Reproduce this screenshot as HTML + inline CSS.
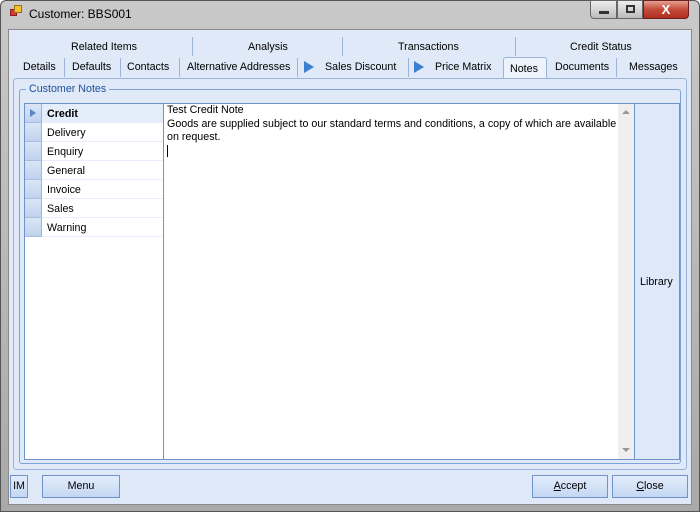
<!DOCTYPE html>
<html><head><style>
*{box-sizing:border-box;margin:0;padding:0}
body{width:700px;height:512px;background:#fff;font-family:"Liberation Sans",sans-serif;font-size:10.7px;color:#000;position:relative;overflow:hidden}
.abs{position:absolute}
.frame{left:0;top:0;width:700px;height:512px;background:linear-gradient(#c9c9c9,#a9a9a9);border:1px solid #555;border-radius:6px 6px 0 0}
.client{left:8px;top:29px;width:684px;height:476px;background:#dfe9f7;border:1px solid #8a8a8a}
.t{position:absolute;white-space:nowrap}
.sep{position:absolute;width:1px;background:#9bb3d6}
.btn{position:absolute;border:1px solid #6f93c8;background:linear-gradient(#e3edfb,#c3d7f3);text-align:center;line-height:21px}
.row{position:absolute;left:0;width:138px;height:19px;line-height:19px;border-bottom:1px solid #e6eef9}
.rh{position:absolute;left:0;top:0;width:17px;height:19px;background:linear-gradient(#dae6f6,#bfd2ee);border-right:1px solid #9eb6da;border-bottom:1px solid #a8bee0}
</style></head><body>
<div class="abs frame"></div>
<div class="abs" style="left:10px;top:9px;width:7px;height:7px;background:#d33;border:1px solid #822"></div>
<div class="abs" style="left:14px;top:5px;width:8px;height:8px;background:#f0c030;border:1px solid #a07010"></div>
<div class="t" style="left:29px;top:7px;font-size:12px">Customer: BBS001</div>
<div class="abs" style="left:590px;top:0;width:27px;height:19px;border:1px solid #666;border-radius:0 0 0 4px;background:linear-gradient(#eee,#bbb)"><div class="abs" style="left:8px;top:10px;width:10px;height:3px;background:#333"></div></div>
<div class="abs" style="left:617px;top:0;width:26px;height:19px;border:1px solid #666;background:linear-gradient(#eee,#bbb)"><div class="abs" style="left:8px;top:4px;width:9px;height:8px;border:2px solid #333"></div></div>
<div class="abs" style="left:643px;top:0;width:46px;height:19px;border:1px solid #6b2020;border-radius:0 0 4px 0;background:linear-gradient(#e8a090,#c44a3a 50%,#b03020);color:#fff;font-weight:bold;text-align:center;line-height:17px;font-size:13px">X</div>
<div class="abs client"></div>
<div class="t" style="left:71px;top:41px">Related Items</div>
<div class="sep" style="left:192px;top:37px;height:19px"></div>
<div class="t" style="left:248px;top:41px">Analysis</div>
<div class="sep" style="left:342px;top:37px;height:19px"></div>
<div class="t" style="left:398px;top:41px">Transactions</div>
<div class="sep" style="left:515px;top:37px;height:19px"></div>
<div class="t" style="left:570px;top:41px">Credit Status</div>
<div class="t" style="left:23px;top:61px">Details</div>
<div class="sep" style="left:64px;top:58px;height:19px"></div>
<div class="t" style="left:72px;top:61px">Defaults</div>
<div class="sep" style="left:120px;top:58px;height:19px"></div>
<div class="t" style="left:127px;top:61px">Contacts</div>
<div class="sep" style="left:179px;top:58px;height:19px"></div>
<div class="t" style="left:187px;top:61px">Alternative Addresses</div>
<div class="sep" style="left:297px;top:58px;height:19px"></div>
<div class="abs" style="left:304px;top:61px;width:0;height:0;border-left:10px solid #3b7fd0;border-top:6px solid transparent;border-bottom:6px solid transparent"></div>
<div class="t" style="left:325px;top:61px">Sales Discount</div>
<div class="sep" style="left:408px;top:58px;height:19px"></div>
<div class="abs" style="left:414px;top:61px;width:0;height:0;border-left:10px solid #3b7fd0;border-top:6px solid transparent;border-bottom:6px solid transparent"></div>
<div class="t" style="left:435px;top:61px">Price Matrix</div>
<div class="abs" style="left:503px;top:57px;width:44px;height:22px;background:#edf3fc;border:1px solid #9bb3d6;border-bottom:none;border-radius:3px 3px 0 0"></div>
<div class="t" style="left:510px;top:63px">Notes</div>
<div class="t" style="left:555px;top:61px">Documents</div>
<div class="sep" style="left:616px;top:58px;height:19px"></div>
<div class="t" style="left:629px;top:61px">Messages</div>
<div class="abs" style="left:13px;top:78px;width:674px;height:392px;border:1px solid #9bb3d6;border-radius:3px;background:#dfe9f7"></div>
<div class="abs" style="left:19px;top:89px;width:662px;height:375px;border:1px solid #7fa2d6;border-radius:3px"></div>
<div class="t" style="left:26px;top:83px;background:#dfe9f7;padding:0 3px;color:#1f4f9a">Customer Notes</div>
<div class="abs" style="left:24px;top:103px;width:656px;height:357px;border:1px solid #6f93c8;background:#fff"></div>
<div class="abs" style="left:25px;top:104px;width:138px;height:355px;background:#fff">
<div class="row" style="top:0;background:#e4eefb"><div class="rh"><div class="abs" style="left:5px;top:5px;border-left:6px solid #5a86c7;border-top:4px solid transparent;border-bottom:4px solid transparent"></div></div><span class="t" style="left:22px;top:1px;font-weight:bold">Credit</span></div>
<div class="row" style="top:19px"><div class="rh"></div><span class="t" style="left:22px;top:1px">Delivery</span></div>
<div class="row" style="top:38px"><div class="rh"></div><span class="t" style="left:22px;top:1px">Enquiry</span></div>
<div class="row" style="top:57px"><div class="rh"></div><span class="t" style="left:22px;top:1px">General</span></div>
<div class="row" style="top:76px"><div class="rh"></div><span class="t" style="left:22px;top:1px">Invoice</span></div>
<div class="row" style="top:95px"><div class="rh"></div><span class="t" style="left:22px;top:1px">Sales</span></div>
<div class="row" style="top:114px"><div class="rh"></div><span class="t" style="left:22px;top:1px">Warning</span></div>
</div>
<div class="abs" style="left:163px;top:104px;width:1px;height:355px;background:#6f93c8"></div>
<div class="t" style="left:167px;top:104px;line-height:13.5px;white-space:normal;width:450px">Test Credit Note<br>Goods are supplied subject to our standard terms and conditions, a copy of which are available on request.<br><span style="display:inline-block;width:1px;height:12px;background:#000"></span></div>
<div class="abs" style="left:618px;top:104px;width:16px;height:355px;background:#efefef"></div>
<div class="abs" style="left:622px;top:110px;border-bottom:4px solid #999;border-left:4px solid transparent;border-right:4px solid transparent"></div>
<div class="abs" style="left:622px;top:448px;border-top:4px solid #999;border-left:4px solid transparent;border-right:4px solid transparent"></div>
<div class="abs" style="left:634px;top:103px;width:46px;height:357px;border:1px solid #6f93c8;background:#dde9f9"></div>
<div class="t" style="left:640px;top:276px">Library</div>
<div class="btn" style="left:10px;top:475px;width:18px;height:23px">IM</div>
<div class="btn" style="left:42px;top:475px;width:78px;height:23px">Menu</div>
<div class="btn" style="left:532px;top:475px;width:76px;height:23px"><u>A</u>ccept</div>
<div class="btn" style="left:612px;top:475px;width:76px;height:23px"><u>C</u>lose</div>
</body></html>
